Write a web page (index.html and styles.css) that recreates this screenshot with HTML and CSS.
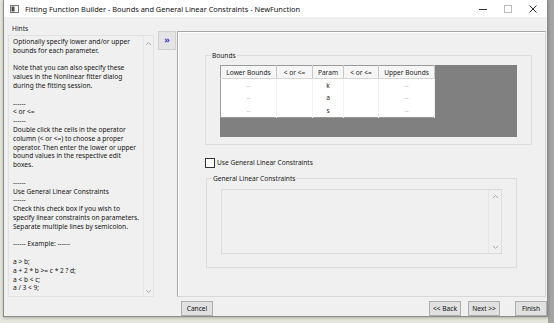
FILE: index.html
```html
<!DOCTYPE html>
<html lang="en">
<head>
    <meta charset="UTF-8">
    <title>Fitting Function Builder</title>
    <link rel="stylesheet" href="styles.css">
</head>
<body>

<div class="window">
    <div class="titlebar">
        <svg class="app-icon" width="9" height="8" viewBox="0 0 9 8">
            <rect x="0.5" y="0.5" width="8" height="7" fill="#fff" stroke="#777"/>
            <rect x="1.5" y="1.5" width="3" height="5" fill="#4a4a4a"/>
        </svg>
        <span class="title">Fitting Function Builder - Bounds and General Linear Constraints - NewFunction</span>
        <div class="controls">
            <svg width="10" height="10" viewBox="0 0 10 10"><path d="M1 5.5h8" stroke="#333" stroke-width="1"/></svg>
            <svg width="10" height="10" viewBox="0 0 10 10"><rect x="1.5" y="1.5" width="7" height="7" fill="none" stroke="#bbb"/></svg>
            <svg width="10" height="10" viewBox="0 0 10 10"><path d="M1.5 1.5l7 7M8.5 1.5l-7 7" stroke="#333" stroke-width="1"/></svg>
        </div>
    </div>

    <div class="client">
        <div class="hints">
            <div class="hints-label">Hints</div>
            <div class="hints-box">
                <div class="hints-text">Optionally specify lower and/or upper
bounds for each parameter.

Note that you can also specify these
values in the Nonlinear fitter dialog
during the fitting session.

------
&lt; or &lt;=
------
Double click the cells in the operator
column (&lt; or &lt;=) to choose a proper
operator. Then enter the lower or upper
bound values in the respective edit
boxes.

------
Use General Linear Constraints
------
Check this check box if you wish to
specify linear constraints on parameters.
Separate multiple lines by semicolon.

------ Example: ------

a &gt; b;
a + 2 * b &gt;= c * 2 ? d;
a &lt; b &lt; c;
a / 3 &lt; 9;</div>
                <div class="vscroll">
                    <svg width="7" height="5" viewBox="0 0 7 5"><path d="M1 4l2.5-2.5L6 4" fill="none" stroke="#aaa"/></svg>
                    <svg width="7" height="5" viewBox="0 0 7 5"><path d="M1 1l2.5 2.5L6 1" fill="none" stroke="#aaa"/></svg>
                </div>
            </div>
        </div>

        <div class="right">
            <div class="top-row">
                <div class="toggle">&raquo;</div>
                <div class="panel">
                    <div class="group bounds">
                        <span class="group-label">Bounds</span>
                        <div class="grid-area">
                            <table class="bounds-table">
                                <tr>
                                    <th class="c1">Lower Bounds</th>
                                    <th class="c2">&lt; or &lt;=</th>
                                    <th class="c3">Param</th>
                                    <th class="c4">&lt; or &lt;=</th>
                                    <th class="c5">Upper Bounds</th>
                                </tr>
                                <tr><td class="dim">--</td><td></td><td>k</td><td></td><td class="dim">--</td></tr>
                                <tr><td class="dim">--</td><td></td><td>a</td><td></td><td class="dim">--</td></tr>
                                <tr><td class="dim">--</td><td></td><td>s</td><td></td><td class="dim">--</td></tr>
                            </table>
                        </div>
                    </div>

                    <label class="check-row">
                        <span class="checkbox"></span>
                        <span>Use General Linear Constraints</span>
                    </label>

                    <div class="group glc">
                        <span class="group-label">General Linear Constraints</span>
                        <div class="edit-box">
                            <div class="edit-text"></div>
                            <div class="vscroll small">
                                <svg width="7" height="5" viewBox="0 0 7 5"><path d="M1 4l2.5-2.5L6 4" fill="none" stroke="#aaa"/></svg>
                                <svg width="7" height="5" viewBox="0 0 7 5"><path d="M1 1l2.5 2.5L6 1" fill="none" stroke="#aaa"/></svg>
                            </div>
                        </div>
                    </div>
                </div>
            </div>

            <div class="button-row">
                <button class="btn cancel">Cancel</button>
                <div class="spacer"></div>
                <button class="btn">&lt;&lt; Back</button>
                <button class="btn next">Next &gt;&gt;</button>
                <button class="btn finish">Finish</button>
            </div>
        </div>
    </div>
</div>

</body>
</html>
```

FILE: styles.css
```css
body {
    margin: 0;
    height: 323px;
    overflow: hidden;
    font-family: "Noto Sans", "Open Sans", sans-serif;
    font-size: 6.6px;
    color: #1a1a1a;
    background: linear-gradient(to right, #e4e8dc 0, #e4e8dc 548px, #a4a4a4 548px);
}
.window {
    margin-left: 3px;
    width: 543px;
    height: 316px;
    border: 1px solid #8c8c8c;
    border-top: none;
    background-color: #f0f0f0;
    box-shadow: 0 1px 3px rgba(0, 0, 0, 0.25);
}
.titlebar {
    height: 17px;
    background-color: #fff;
    display: flex;
    align-items: center;
}
.app-icon {
    margin-left: 6px;
    margin-right: 6px;
}
.title {
    font-size: 7.4px;
    color: #111;
}
.controls {
    margin-left: auto;
    display: flex;
    gap: 15px;
    margin-right: 9px;
}
.client {
    display: flex;
    height: 299px;
}
.hints {
    margin-left: 4px;
    width: 146px;
    padding-top: 8px;
}
.hints-label {
    height: 8px;
    line-height: 8px;
    padding-left: 4px;
}
.hints-box {
    margin-top: 2px;
    height: 260px;
    border: 1px solid #e2e2e2;
    display: flex;
}
.hints-text {
    flex: 1;
    white-space: pre;
    line-height: 8.8px;
    padding: 2px 0 0 4px;
    color: #141414;
    overflow: hidden;
}
.vscroll {
    width: 9px;
    border-left: 1px solid #e6e6e6;
    display: flex;
    flex-direction: column;
    justify-content: space-between;
    align-items: center;
    padding: 5px 0 2px;
}
.vscroll.small {
    width: 12px;
    padding: 4px 0 3px;
}
.right {
    display: flex;
    flex-direction: column;
}
.top-row {
    display: flex;
    margin-top: 14px;
    height: 267px;
}
.toggle {
    margin-left: 4px;
    width: 18px;
    height: 19px;
    background-color: #e4e4e4;
    border: 1px solid #d0d0d0;
    box-sizing: border-box;
    color: #3c3ccc;
    font-size: 9px;
    font-weight: bold;
    line-height: 16px;
    text-align: center;
}
.panel {
    margin-left: 1px;
    width: 369px;
    box-sizing: border-box;
    border: 1px solid #a6a6a6;
    border-right-color: #d8d8d8;
    border-bottom-color: #d8d8d8;
    box-shadow: inset 1px 1px 0 #fff;
    padding-top: 23px;
    padding-left: 27px;
}
.group {
    position: relative;
    box-sizing: border-box;
    border: 1px solid #dcdcdc;
}
.group-label {
    position: absolute;
    top: -5px;
    left: 5px;
    padding: 0 1px;
    background-color: #f0f0f0;
    line-height: 9px;
}
.bounds {
    width: 327px;
    height: 90px;
    padding: 9px 0 0 14px;
}
.grid-area {
    width: 297px;
    height: 72px;
    background-color: #808080;
}
.bounds-table {
    border-collapse: collapse;
    background-color: #fff;
    border: 1px solid #9a9a9a;
    table-layout: fixed;
}
.bounds-table th {
    height: 12px;
    padding: 0;
    font-weight: normal;
    color: #222;
    background-color: #f6f6f6;
    border-right: 1px solid #c8c8c8;
    border-bottom: 1px solid #d6d6d6;
}
.bounds-table td {
    height: 12.6px;
    padding: 0;
    text-align: center;
    color: #222;
    border-right: 1px solid #f2f2f2;
}
.bounds-table td.dim {
    color: #b4b4b4;
}
.c1, .c5 { width: 55px; }
.c2 { width: 35px; }
.c3 { width: 30px; }
.c4 { width: 34px; }
.check-row {
    display: flex;
    align-items: center;
    gap: 2px;
    margin-top: 13px;
    height: 9px;
}
.checkbox {
    width: 8px;
    height: 8px;
    border: 1px solid #333;
    background-color: #fff;
}
.glc {
    margin-top: 11px;
    margin-left: 1px;
    width: 311px;
    height: 90px;
    padding: 10px 0 0 14px;
}
.edit-box {
    width: 281px;
    height: 65px;
    box-sizing: border-box;
    border: 1px solid #dadada;
    display: flex;
}
.edit-text {
    flex: 1;
}
.button-row {
    display: flex;
    margin-top: 4px;
    padding-left: 27px;
    gap: 7px;
}
.spacer {
    flex: 1;
}
.btn {
    height: 15px;
    width: 32px;
    padding: 0;
    font-family: inherit;
    font-size: 6.6px;
    color: #111;
    background-color: #e1e1e1;
    border: 1px solid #adadad;
}
.next {
    margin-right: 8px;
}
.finish {
    margin-right: -1px;
}
```
